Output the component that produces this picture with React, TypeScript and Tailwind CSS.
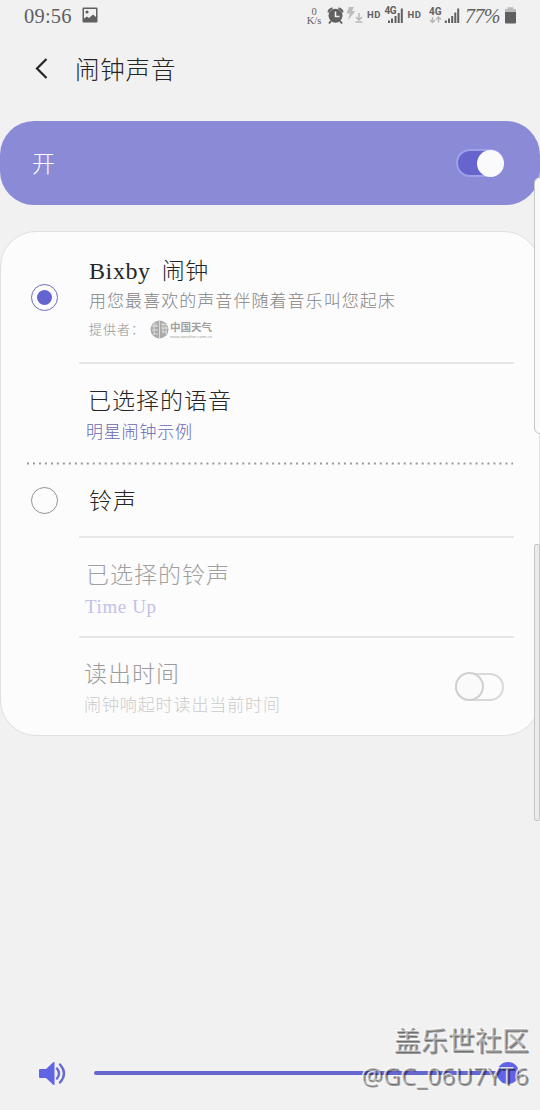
import { FC, ReactNode } from 'react';

const StatusBar: FC = () => (
  <div className="flex h-8 items-center pl-[24px] pr-[24px] text-[#606060]">
    <span className="w-[58px] text-[20.5px] leading-8 tracking-[0.2px]">
      09:56
    </span>
    <svg width="16" height="16" viewBox="0 0 16 16" className="-mt-0.5">
      <path
        fillRule="evenodd"
        fill="#606060"
        d="M1.500 0.500h13q1 0 1 1v13q0 1-1 1h-13q-1 0-1-1v-13q0-1 1-1zM2 2v9.500l3-2 2 1.500 4-3.500 3 2.500V2z"
      />
      <circle cx="5" cy="5" r="1.600" fill="#606060" />
    </svg>
    <div className="-mr-[20px] ml-auto flex shrink-0">
      <div className="flex w-[18px] flex-col items-center pt-[7px] text-[10.5px] leading-[9px]">
        <span>0</span>
        <span>K/s</span>
      </div>
      <svg width="213" height="32" viewBox="18 0 213 32">
        <g fill="#606060">
          <g fontFamily="Roboto" fontWeight="700">
            <text x="62" y="18" fontSize="9.500" textLength="13.500">
              HD
            </text>
            <text x="79.500" y="14" fontSize="10" textLength="12">
              4G
            </text>
            <text x="102.500" y="18" fontSize="9.500" textLength="13.500">
              HD
            </text>
            <text x="124" y="14.500" fontSize="10" textLength="12.500">
              4G
            </text>
          </g>
          <text
            x="160"
            y="23"
            fontSize="20"
            fontStyle="italic"
            textLength="35.500"
          >
            77%
          </text>
          <path d="M200 12h11v10.500q0 1-1 1h-9q-1 0-1-1z" />
          <circle cx="30.500" cy="15.800" r="7" />
          <path
            d="M23.500 12.500q0-3 4-4.300M37.500 12.500q0-3-4-4.300M26 21l-2 2.500M35 21l2 2.500"
            stroke="#606060"
            strokeWidth="2"
            fill="none"
          />
          <path d="M83 20.500h2v2.500h-2zM86 18.500h2v4.500h-2zM89.500 16h2v7h-2zM92.700 13h2v10h-2zM95.800 8.500h2v14.500h-2z" />
          <path d="M139.800 20.500h2v2.500h-2zM143 18.500h2v4.500h-2zM146.200 16h2v7h-2zM149.300 12.500h2v10.500h-2zM152.200 8.500h2v14.500h-2z" />
        </g>
        <path
          d="M30.500 11.500v5h4"
          stroke="#f1f1f1"
          strokeWidth="1.600"
          fill="none"
        />
        <g fill="#bcbcbc">
          <path d="M44 7h5l-2 4h3.500l-7.500 9 1.800-6.500h-3.300z" />
          <path d="M200 12V9h2.500V7.300h6V9h2.500v3z" />
        </g>
        <path
          d="M54 13v7M51 17l3 3 3-3M50.500 22h7M127.500 17v5.500M125 20l2.500 2.500 2.500-2.500M133.500 22.500v-5.500M131 19.500l2.500-2.500 2.500 2.500"
          stroke="#b8b8b8"
          strokeWidth="1.500"
          fill="none"
        />
      </svg>
    </div>
  </div>
);

const Radio: FC<{ checked?: boolean }> = ({ checked }) =>
  checked ? (
    <span className="flex size-[27px] items-center justify-center rounded-full border-[1.5px] border-[#6b6bbd]">
      <span className="size-[15px] rounded-full bg-[#6464d0]" />
    </span>
  ) : (
    <span className="size-[27px] rounded-full border border-[#929292]" />
  );

const Switch: FC<{ on?: boolean }> = ({ on }) =>
  on ? (
    <span className="flex h-[28px] w-[48px] items-center justify-end rounded-full border-2 border-[#a0a0ea] bg-[#6565cd]">
      <span className="-mr-[2px] size-[27px] shrink-0 rounded-full bg-[#fafafc]" />
    </span>
  ) : (
    <span className="flex h-[28px] w-[49px] items-center rounded-full border-2 border-[#d9d9d9]">
      <span className="-ml-[2px] size-[29px] shrink-0 rounded-full border-2 border-[#d0d0d0] bg-[#fafafa]" />
    </span>
  );

const Row: FC<{ height: string; left?: ReactNode; children: ReactNode }> = ({
  height,
  left,
  children,
}) => (
  <div className={`flex ${height}`}>
    <div className="flex w-[78px] shrink-0 items-center pb-[2px] pl-[30px]">
      {left}
    </div>
    {children}
  </div>
);

const Globe: FC = () => (
  <svg width="19" height="19" viewBox="0 0 19 19">
    <circle cx="9.500" cy="9.500" r="9" fill="#aaa" />
    <path
      d="M9.500 1v17M2 6h6M2 10h6M3 14h5M4 3v12M11 4l6 1M11 8h7M12 12h5M13 3v10M16 6v8M6 3v4"
      stroke="#e9e9e9"
      strokeWidth="0.800"
      fill="none"
    />
  </svg>
);

const App: FC = () => {
  return (
    <div className="relative flex h-[1110px] w-[540px] flex-col overflow-hidden bg-[#f1f1f1] font-['Liberation_Serif','Noto_Sans_CJK_SC',serif] font-light text-[#252525]">
      <StatusBar />
      <header className="flex h-[89px] items-start pl-[34px] pt-[20px]">
        <svg width="16" height="24" viewBox="0 0 16 24" className="mt-[5px]">
          <path
            d="M12.500 2L3 11.500l9.500 9.500"
            stroke="#252525"
            strokeWidth="2.200"
            fill="none"
          />
        </svg>
        <h1 className="ml-[25px] mt-[2px] text-[24.5px] leading-[34px] tracking-[0.8px]">
          闹钟声音
        </h1>
      </header>

      <div className="flex h-[84px] shrink-0 items-center justify-between rounded-[34px] bg-[#8b8ad7] pl-[32px] pr-[36px]">
        <span className="pt-[4px] text-[23px] text-white">开</span>
        <Switch on />
      </div>

      <main className="mt-[26px] h-[505px] shrink-0 rounded-[36px] border border-[#e0e0e0] bg-[#fcfcfc]">
        <Row height="h-[132px]" left={<Radio checked />}>
          <div className="flex w-[435px] flex-col border-b-2 border-[#e6e6e6] pl-[10px] pt-[22px]">
            <h2 className="text-[23px] leading-[35px] tracking-[0.6px]">
              <span className="text-[24px]">Bixby</span>
              <span className="ml-[11px]">闹钟</span>
            </h2>
            <p className="text-[17px] leading-[26px] tracking-[1.05px] text-[#858585]">
              用您最喜欢的声音伴随着音乐叫您起床
            </p>
            <div className="flex h-[29px] items-center text-[13px] tracking-[1px] text-[#929292]">
              <span className="w-[61px] whitespace-nowrap">提供者：</span>
              <Globe />
              <div className="ml-[1px] flex flex-col pt-[1px] text-[#a0a0a0]">
                <span className="text-[10.5px] font-bold leading-[12px] tracking-normal">
                  中国天气
                </span>
                <span className="font-['Liberation_Sans'] text-[4.3px] leading-[5px] tracking-[0.1px]">
                  www.weather.com.cn
                </span>
              </div>
            </div>
          </div>
        </Row>
        <Row height="h-[98px]">
          <div className="pl-[9px] pt-[21px]">
            <h2 className="text-[23px] leading-[34px] tracking-[1px]">
              已选择的语音
            </h2>
            <p className="-ml-[2px] text-[17px] leading-[27px] tracking-[0.8px] text-[#6767b5]">
              明星闹钟示例
            </p>
          </div>
        </Row>
        <svg width="486" height="3" className="ml-[26px] block">
          <path
            d="M0 1.500h486"
            stroke="#999"
            strokeWidth="2"
            strokeDasharray="2 3.980"
          />
        </svg>
        <Row height="h-[73px]" left={<Radio />}>
          <div className="flex w-[435px] items-center border-b-2 border-[#e6e6e6] pl-[10px] pt-[3px] text-[23px] tracking-[1px]">
            铃声
          </div>
        </Row>
        <Row height="h-[100px]">
          <div className="w-[435px] border-b-2 border-[#e6e6e6] pl-[6px] pt-[21px]">
            <h2 className="pl-[1px] text-[23px] leading-[34px] tracking-[1px] text-[#a0a0a0]">
              已选择的铃声
            </h2>
            <p className="text-[19px] leading-[27px] tracking-[0.6px] text-[#c2c1e8]">
              Time Up
            </p>
          </div>
        </Row>
        <Row height="h-[97px]">
          <div className="flex w-[425px] items-center justify-between pl-[5px]">
            <div className="pt-[4px]">
              <h2 className="text-[23px] leading-[34px] tracking-[1px] text-[#9c9c9c]">
                读出时间
              </h2>
              <p className="text-[17px] leading-[27px] tracking-[0.9px] text-[#cbcbcb]">
                闹钟响起时读出当前时间
              </p>
            </div>
            <Switch />
          </div>
        </Row>
      </main>

      <footer className="mt-auto flex h-[74px] items-center pl-[39px]">
        <svg width="28" height="24" viewBox="0 0 28 24">
          <path
            d="M1 8h6l7.500-7h1v23h-1L7 17H1q-1 0-1-1V9q0-1 1-1z"
            fill="#6264e6"
          />
          <path
            d="M18 7.500q4 5 0 10M21 3.500q8 9 0 18"
            stroke="#6a6bd0"
            strokeWidth="2.400"
            fill="none"
            strokeLinecap="round"
          />
        </svg>
        <div className="ml-[27px] flex w-[425px] items-center">
          <div className="h-[4px] flex-1 rounded-full bg-[#6666cf]" />
          <div className="size-[22px] rounded-full bg-[#6062e8]" />
        </div>
      </footer>

      {/* edge panel handles */}
      <div className="absolute left-[534px] top-[177px] h-[257px] w-[12px] rounded-[6px] border border-[#c6c6c6] bg-[#fafafa]" />
      <div className="absolute left-[534px] top-[544px] h-[277px] w-[6px] rounded-[2px] border border-[#c6c6c6] bg-[#ebebeb]" />

      {/* watermark */}
      <div className="absolute right-[11px] top-[1024px] text-right font-['Noto_Sans','Noto_Sans_CJK_SC',sans-serif] font-normal text-black/25 [text-shadow:-1px_-1px_0_rgba(255,255,255,0.8),1px_1px_0_rgba(0,0,0,0.4)]">
        <p className="text-[27px] font-medium leading-[34px]">盖乐世社区</p>
        <p className="text-[24px] leading-[35px] tracking-[0.3px]">
          @GC_06U7YT6
        </p>
      </div>
    </div>
  );
};

export default App;
